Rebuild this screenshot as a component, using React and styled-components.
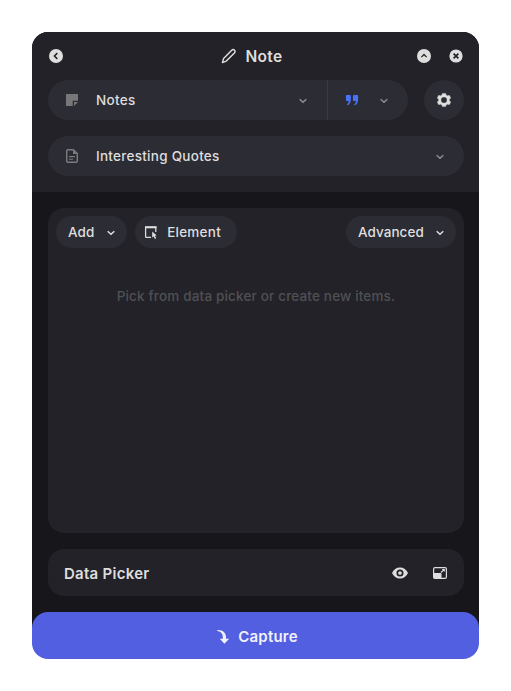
import React from "react";
import styled, { createGlobalStyle } from "styled-components";

const GlobalStyle = createGlobalStyle`
  * { box-sizing: border-box; }
  body { margin: 0; background: #fff; font-family: Inter, "Open Sans", sans-serif; }
  button { font: inherit; color: inherit; border: 0; margin: 0; padding: 0; background: none; }
`;

const Page = styled.main`
  width: 511px;
  height: 691px;
  padding: 32px;
`;

const Window = styled.section`
  display: flex;
  flex-direction: column;
  width: 447px;
  height: 627px;
  border-radius: 16px 16px 20px 20px;
  background: #17161b;
  color: #dedede;
`;

const Header = styled.header`
  flex: none;
  height: 160px;
  padding: 0 15px 0 16px;
  border-radius: 16px 16px 0 0;
  background: #232228;
`;

const TitleBar = styled.div`
  display: grid;
  grid-template-columns: 48px 1fr 48px;
  align-items: center;
  height: 48px;
`;

const Title = styled.h1`
  display: flex;
  align-items: center;
  justify-content: center;
  gap: 8px;
  margin: 0;
  padding-right: 8px;
  font-size: 15.5px;
  line-height: 20px;
  font-weight: 600;
`;

const Label = styled.span`
  white-space: nowrap;
  letter-spacing: ${(p) => p.$spacing || 0}px;
`;

const TitleLabel = styled(Label)`
  padding-top: 2px;
`;

const WindowActions = styled.div`
  display: flex;
  gap: 16px;
`;

const IconButton = styled.button`
  display: flex;
  width: 16px;
  height: 16px;
`;

const Glyph = styled.svg`
  display: block;
  flex: none;
  width: 16px;
  height: 16px;
  color: ${(p) => p.$color || "#dedede"};
`;

const Row = styled.div`
  display: flex;
  gap: 16px;
  margin-bottom: 16px;
`;

const SelectGroup = styled.div`
  display: flex;
  flex: 1;
  height: 40px;
  overflow: hidden;
  border-radius: 20px;
  background: #2c2c35;
`;

const Select = styled.button`
  display: flex;
  align-items: center;
  gap: 16px;
  width: ${(p) => p.$width || "100%"};
  padding: 0 16px;
  border-left: ${(p) => (p.$divided ? "1px solid #3a3a42" : "0")};
  font-size: 13.5px;
  font-weight: 500;
  line-height: 20px;

  svg:last-child { margin-left: auto; }
`;

const RoundButton = styled.button`
  display: grid;
  place-items: center;
  width: 40px;
  height: 40px;
  border-radius: 50%;
  background: #2c2c35;
`;

const Body = styled.div`
  display: flex;
  flex: 1;
  flex-direction: column;
  gap: 16px;
  padding: 16px 15px 16px 16px;
`;

const Items = styled.section`
  flex: 1;
  padding: 8px;
  border-radius: 16px;
  background: #232228;
`;

const Toolbar = styled.div`
  display: flex;
  gap: 8px;
`;

const Pill = styled.button`
  display: flex;
  align-items: center;
  justify-content: space-between;
  width: ${(p) => p.$width}px;
  height: 32px;
  padding: 0 ${(p) => (p.$leading ? 16 : 8)}px 0 ${(p) => (p.$leading ? 8 : 12)}px;
  margin-left: ${(p) => (p.$end ? "auto" : "0")};
  border-radius: 16px;
  background: #2c2c35;
  font-size: 13.5px;
  font-weight: 500;
`;

const EmptyMessage = styled.p`
  margin: 38px 0 0;
  color: #505054;
  font-size: 13.5px;
  font-weight: 500;
  line-height: 20px;
  text-align: center;
`;

const DataPicker = styled.section`
  display: flex;
  flex: none;
  align-items: center;
  gap: 24px;
  height: 47px;
  padding: 1px 16px 0;
  border-radius: 16px;
  background: #232228;
`;

const PickerTitle = styled.h2`
  flex: 1;
  margin: 0;
  padding-top: 1px;
  font-size: 15px;
  font-weight: 600;
  line-height: 20px;
`;

const CaptureButton = styled.button`
  display: flex;
  flex: none;
  align-items: center;
  justify-content: center;
  gap: 7px;
  height: 47px;
  padding: 2px 0 0 2px;
  border-radius: 16px;
  background: #535fe1;
  color: #f1f1fb;
  font-size: 15px;
  font-weight: 600;
`;

function Icon({ children, ...props }) {
  return <Glyph viewBox="0 0 16 16" fill="none" aria-hidden="true" {...props}>{children}</Glyph>;
}

function Chevron({ color = "#8d8d91" }) {
  return (
    <Icon $color={color}>
      <path d="M4.7 7.2 8 10.3l3.3-3.1" stroke="currentColor" strokeWidth="1.5" />
    </Icon>
  );
}

function CircleIcon({ d, r = 7, width = 1.5 }) {
  return (
    <Icon>
      <circle cx="8" cy="8" r={r} fill="currentColor" />
      <path d={d} stroke="#232228" strokeWidth={width} />
    </Icon>
  );
}

function PencilIcon() {
  return (
    <Icon>
      <path d="m1.4 14.6 1.2-4.2 8.1-8.2c.9-.9 1.9-.9 2.7-.1.9.8.9 1.9 0 2.8l-8.1 8.200-3.900 1.500Z" stroke="currentColor" strokeWidth="1.45" strokeLinejoin="round" />
    </Icon>
  );
}

function NoteIcon() {
  return (
    <Icon $color="#77777a">
      <path d="M2 2h12v6.7H8.7V14H2Z" fill="currentColor" />
      <path d="M10 10h4l-4 4Z" fill="currentColor" />
    </Icon>
  );
}

function QuoteIcon() {
  return (
    <Icon $color="#4673fa">
      <path d="M2.8 3h3.1c.5 0 .9.4.9.9v3.4c0 3.2-.9 5.1-3.4 6l-.6-1.1c1.2-.6 1.8-1.8 1.9-3.3H2.8a.9.9 0 0 1-.9-.9V3.9c0-.5.4-.9.9-.9ZM9.8 3h3.4c.5 0 .9.4.9.9v3.4c0 3.2-.9 5.1-3.4 6l-.6-1.1c1.2-.6 1.8-1.8 1.9-3.3H9.8a.9.9 0 0 1-.9-.9V3.9c0-.5.4-.9.9-.9Z" fill="currentColor" />
    </Icon>
  );
}

function GearIcon() {
  return (
    <Icon>
      <path d="m6.4 1.4-.5 1.7-1.3.7-1.9-.5-1.5 2.6L2.6 7.2v1.6l-1.4 1.3 1.5 2.6 1.9-.5 1.3.7.5 1.7h3.2l.5-1.7 1.3-.7 1.9.5 1.5-2.6-1.4-1.3V7.2l1.4-1.3-1.5-2.6-1.9.5-1.3-.7-.5-1.7ZM8 4.9a3.1 3.1 0 1 1 0 6.2 3.1 3.1 0 0 1 0-6.2Z" fill="currentColor" stroke="currentColor" strokeWidth=".35" strokeLinejoin="round" fillRule="evenodd" />
    </Icon>
  );
}

function FileIcon() {
  return (
    <Icon $color="#7c7c80">
      <path d="M4 1.7h5.4l3.9 3.9V13c0 .8-.5 1.3-1.3 1.3H4c-.8 0-1.3-.5-1.3-1.3V3c0-.8.5-1.3 1.3-1.3Z" stroke="currentColor" strokeWidth="1.4" />
      <path d="M9 2v4h4Z" fill="currentColor" />
      <path d="M5 8.6h6M5 11.3h4" stroke="currentColor" strokeWidth="1.1" />
    </Icon>
  );
}

function ElementIcon() {
  return (
    <Icon>
      <path d="M8 13.4H3.2a.6.6 0 0 1-.6-.6V3h10.2v5" stroke="currentColor" strokeWidth="1.25" />
      <path d="M2 2.300h11.500v2H2Z" fill="currentColor" />
      <path d="M9.2 7.4v6.2l1.4-1.2 1.4 2.5 1.200-.7-1.300-2.400 1.800-.3Z" fill="currentColor" />
    </Icon>
  );
}

function EyeIcon() {
  return (
    <Icon>
      <path d="M0 8c1.6-3.5 4.4-5.5 8-5.5s6.4 2 8 5.5c-1.6 3.5-4.4 5.5-8 5.5S1.6 11.5 0 8Z" fill="currentColor" />
      <circle cx="8" cy="8" r="2.7" stroke="#232228" strokeWidth="1.7" />
    </Icon>
  );
}

function ResizeIcon() {
  return (
    <Icon>
      <rect x="1.6" y="2.6" width="12.8" height="10.8" rx="1.4" stroke="currentColor" strokeWidth="1.2" />
      <path d="M1.5 8h6.7c.8 0 1.3.5 1.3 1.3v4.2H2.8c-.8 0-1.3-.5-1.3-1.3Z" fill="currentColor" />
      <path d="m9 7.5 3-2.9M10.200 4.500h2.100v2.100" stroke="currentColor" strokeWidth="1.1" />
    </Icon>
  );
}

function CaptureIcon() {
  return (
    <Icon $color="#f1f1fb">
      <path d="M2.3 .9C7.400.6 11 3.500 11 8v1.700h3.200L9.400 14.700 4.800 9.700h3V8C7.800 4.500 5.800 2.300 2.300 1.900Z" fill="currentColor" />
    </Icon>
  );
}

export default function App() {
  return (
    <>
      <GlobalStyle />
      <Page>
        <Window>
          <Header>
            <TitleBar>
              <IconButton aria-label="Back"><CircleIcon d="M9.3 5.1 6.4 8l2.9 2.9" /></IconButton>
              <Title><PencilIcon /><TitleLabel $spacing={0.35}>Note</TitleLabel></Title>
              <WindowActions>
                <IconButton aria-label="Collapse"><CircleIcon d="M5.4 9.1 8 6.5l2.6 2.6" width={1.3} /></IconButton>
                <IconButton aria-label="Close"><CircleIcon r={6.6} d="m5.6 5.6 4.8 4.8m0-4.8-4.8 4.8" width={1.7} /></IconButton>
              </WindowActions>
            </TitleBar>
            <Row>
              <SelectGroup>
                <Select $width="279px"><NoteIcon /><Label $spacing={0.3}>Notes</Label><Chevron /></Select>
                <Select $width="81px" $divided aria-label="Quote type"><QuoteIcon /><Chevron /></Select>
              </SelectGroup>
              <RoundButton aria-label="Settings"><GearIcon /></RoundButton>
            </Row>
            <SelectGroup>
              <Select><FileIcon /><Label $spacing={0.27}>Interesting Quotes</Label><Chevron /></Select>
            </SelectGroup>
          </Header>
          <Body>
            <Items>
              <Toolbar>
                <Pill $width={71}><Label $spacing={0.15}>Add</Label><Chevron color="#dedede" /></Pill>
                <Pill $width={102} $leading><ElementIcon /><Label $spacing={0.25}>Element</Label></Pill>
                <Pill $width={110} $end><Label $spacing={0.05}>Advanced</Label><Chevron color="#dedede" /></Pill>
              </Toolbar>
              <EmptyMessage><Label $spacing={0.17}>Pick from data picker or create new items.</Label></EmptyMessage>
            </Items>
            <DataPicker>
              <PickerTitle><Label $spacing={0.27}>Data Picker</Label></PickerTitle>
              <IconButton aria-label="Preview"><EyeIcon /></IconButton>
              <IconButton aria-label="Expand"><ResizeIcon /></IconButton>
            </DataPicker>
          </Body>
          <CaptureButton><CaptureIcon /><Label $spacing={0.2}>Capture</Label></CaptureButton>
        </Window>
      </Page>
    </>
  );
}
